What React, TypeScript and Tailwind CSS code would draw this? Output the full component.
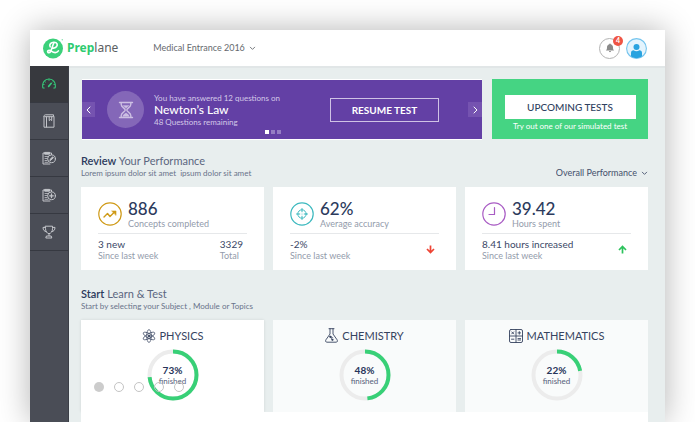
import type { ReactNode } from "react";

const stroke = {
  fill: "none",
  stroke: "currentColor",
  strokeLinecap: "round" as const,
  strokeLinejoin: "round" as const,
};

function Chevron({ dir, className }: { dir: "left" | "right" | "down"; className?: string }) {
  const d = { left: "M5 1 2 4l3 3", right: "M3 1l3 3-3 3", down: "M1.5 2.5 4 5l2.5-2.5" }[dir];
  return (
    <svg viewBox="0 0 8 8" className={className} {...stroke} aria-hidden="true">
      <path d={d} />
    </svg>
  );
}

function GaugeIcon() {
  return (
    <svg viewBox="0 0 14 14" className="size-[14px] text-[#35c778]" {...stroke} strokeWidth="1.1" aria-hidden="true">
      <path d="M2.2 11H.9C-.3 5.500 3 2 7 2s7.300 3.500 6.100 9h-1.300" />
      <path d="M7 2v1.600M2.600 4.200l1 1M11.400 4.200l-.6.600M1 7.500h1.200M13 7.500h-1.200" strokeWidth=".8" />
      <path d="M6.600 9.400 9.300 6.300" strokeWidth="1.600" />
    </svg>
  );
}

function BookIcon() {
  return (
    <svg viewBox="0 0 12 14" className="h-[14px] w-[12px]" {...stroke} strokeWidth="1" aria-hidden="true">
      <path d="M1 2.500C1 1.300 1.500.8 2.500.8h8v1.900H2.200M1 2.500v10.700h10V2.700M3.500 3v10" />
      <path d="M6.200 3v3.600l1.300-1 1.200 1V3" />
    </svg>
  );
}

function ClipboardIcon({ kind }: { kind: "edit" | "add" }) {
  return (
    <svg viewBox="0 0 14 14" className="size-[14px]" {...stroke} strokeWidth="1" aria-hidden="true">
      <path d="M3 2H1v11h7M7.500 2h2v1.500" />
      <path d="M3 1.400h4.500v1.800H3z" fill="currentColor" />
      <path d="M3 5.500h3M3 7.500h2M3 9.500h2M3 11.300h3" strokeWidth=".8" />
      <circle cx="9.500" cy="7.800" r="3.900" />
      {kind === "edit" ? (
        <path d="m8 9.300.4-1.200 2.300-2.300.8.800-2.300 2.300z" fill="currentColor" />
      ) : (
        <path d="M9.500 6v3.600M7.700 7.800h3.600" strokeWidth="1.300" />
      )}
    </svg>
  );
}

function TrophyIcon() {
  return (
    <svg viewBox="0 0 14 14" className="size-[14px]" {...stroke} strokeWidth="1" aria-hidden="true">
      <path d="M3.500 1.200h7v2.500c0 2.700-1.200 4.500-3.500 5-2.300-.5-3.500-2.300-3.500-5z" />
      <path d="M3.500 2.400H1c0 2.600 1.200 4 3.200 4.200M10.500 2.400H13c0 2.600-1.200 4-3.200 4.200M7 8.700v2M4.800 11h4.400l.6 2H4.200z" />
    </svg>
  );
}

function AtomIcon() {
  return (
    <svg viewBox="0 0 14 14" className="size-[14px]" {...stroke} strokeWidth=".7" aria-hidden="true">
      <ellipse cx="7" cy="7" rx="2.300" ry="6.500" />
      <ellipse cx="7" cy="7" rx="2.300" ry="6.500" transform="rotate(60 7 7)" />
      <ellipse cx="7" cy="7" rx="2.300" ry="6.500" transform="rotate(120 7 7)" />
      <circle cx="7" cy="7" r="1" fill="currentColor" />
    </svg>
  );
}

function FlaskIcon() {
  return (
    <svg viewBox="0 0 13 15" className="h-[15px] w-[13px]" {...stroke} strokeWidth=".9" aria-hidden="true">
      <path d="M4 .7h5M5 .7V6L1 11.700c-.9 1.400-.3 2.500 1 2.500h9c1.300 0 1.900-1.100 1-2.500L8 6V.7" />
      <path d="m5.300 8.800 2.500 1M5.300 8.800l2 3" strokeWidth=".7" />
      <circle cx="5.300" cy="8.800" r=".7" fill="currentColor" />
      <circle cx="7.300" cy="11.800" r=".6" fill="currentColor" />
    </svg>
  );
}

function MathIcon() {
  return (
    <svg viewBox="0 0 14 14" className="size-[14px]" {...stroke} strokeWidth=".9" aria-hidden="true">
      <rect x=".5" y=".5" width="13" height="13" rx="1.500" />
      <path d="M7 .5v13M.5 7h13" />
      <path d="m2.700 2.900 2 2M4.700 2.900l-2 2M9 3.900h2.600M10.300 2.600v2.600M2.500 10.200h2.400M9 9.600h2.600M9 11h2.600" />
    </svg>
  );
}

function TrendIcon() {
  return (
    <svg viewBox="0 0 24 24" className="size-[24px] shrink-0 text-[#cf9a17]" {...stroke} aria-hidden="true">
      <circle cx="12" cy="12" r="11.200" strokeWidth="1.200" />
      <path d="m6 15 3.500-3.500 2.500 3L16 10.500" strokeWidth="1.400" />
      <path d="M14 9h4v4z" fill="currentColor" strokeWidth=".6" />
    </svg>
  );
}

function TargetIcon() {
  return (
    <svg viewBox="0 0 24 24" className="size-[24px] shrink-0 text-[#3db9bf]" {...stroke} aria-hidden="true">
      <circle cx="12" cy="12" r="11.200" strokeWidth="1.200" />
      <circle cx="12" cy="12" r="4.200" />
      <path d="M12 6.500v3.300M12 14.200v3.300M6.500 12h3.300M14.200 12h3.300" />
      <circle cx="12" cy="12" r=".5" fill="currentColor" stroke="none" />
    </svg>
  );
}

function ClockIcon() {
  return (
    <svg viewBox="0 0 24 24" className="size-[24px] shrink-0 text-[#a95cc4]" {...stroke} aria-hidden="true">
      <circle cx="12" cy="12" r="11.200" strokeWidth="1.200" />
      <path d="M12.500 5.500v7H7" strokeWidth="1.200" />
    </svg>
  );
}

function Arrow({ up }: { up?: boolean }) {
  return (
    <svg
      viewBox="0 0 9 9"
      className={up ? "size-[9px] text-[#2cc25c]" : "size-[9px] rotate-180 text-[#ee4434]"}
      {...stroke}
      strokeLinecap="butt"
      strokeLinejoin="miter"
      strokeWidth="1.700"
      aria-hidden="true"
    >
      <path d="M4.500 8.500V1.500M1 5l3.500-3.500L8 5" />
    </svg>
  );
}

function Picker({ label, value, className }: { label: string; value: string; className: string }) {
  return (
    <div className={"flex items-center gap-[4px] " + className}>
      <select
        aria-label={label}
        className="field-sizing-content appearance-none bg-transparent text-[9px] leading-[12px] outline-none"
      >
        <option>{value}</option>
      </select>
      <Chevron dir="down" className="size-[7px]" />
    </div>
  );
}

function Header() {
  return (
    <header className="flex h-[36px] items-center bg-white pr-[18px] pl-[13px]">
      <a href="#" className="flex items-center gap-[3px]">
        <svg viewBox="0 0 21 21" className="size-[21px]" aria-hidden="true">
          <circle cx="10" cy="10.500" r="10" fill="#3bd07a" />
          <circle cx="19.300" cy="1.800" r=".8" fill="#8be0b0" />
          <path
            d="M7.200 8.800C5.800 6.500 8 4.200 11 4.300c3.300.1 4 2.600 2.500 4.300-1.200 1.300-2.800 1.700-4 1.400M11 4.600c-1.600 3-2 6.500-3.400 8.900-.8 1.500-3.100 1.500-3-.1.200-1.500 2.300-1.400 3.800-.3 2.500 1.900 5.200 2.300 7-.2"
            fill="none"
            stroke="#fff"
            strokeWidth="1.600"
            strokeLinecap="round"
          />
        </svg>
        <span className="font-['Noto_Sans',sans-serif] text-[12px] leading-[16px] text-[#5c5f63]">
          <b className="font-bold text-[#2ecb70]">Prep</b>lane
        </span>
      </a>
      <Picker label="Course" value="Medical Entrance 2016" className="ml-[35px] text-[#66696e]" />
      <div className="ml-auto flex items-center gap-[6px]">
        <button
          aria-label="Notifications"
          className="relative flex size-[21px] items-center justify-center rounded-full border border-[#b3b3b3] text-[#8a8a8a]"
        >
          <svg viewBox="0 0 10 10" className="size-[10px]" fill="currentColor" aria-hidden="true">
            <path d="M5 .5c.5 0 .7.300.7.700C7.300 1.600 8 2.800 8 4.300c0 1.800.3 2.500 1.200 3.200H.8C1.700 6.800 2 6.100 2 4.300c0-1.500.7-2.700 2.300-3.100 0-.4.200-.7.7-.7zM4 8.100h2c0 .700-.4 1.100-1 1.100s-1-.4-1-1.100z" />
          </svg>
          <span className="absolute -top-[3px] -right-[4px] flex size-[10px] items-center justify-center rounded-full bg-[#ef5444] text-[7px] leading-none font-bold text-white">
            4
          </span>
        </button>
        <button aria-label="Account" className="size-[21px]">
          <svg viewBox="0 0 21 21" className="size-[21px]" aria-hidden="true">
            <circle cx="10.500" cy="10.500" r="9.900" fill="#e4f4fd" stroke="#74c4ee" strokeWidth="1.100" />
            <circle cx="10.500" cy="9" r="3" fill="#29a3e0" />
            <path d="M5 18.300V15c0-1.800 1-2.600 2.700-2.700.7.700 1.700 1 2.800 1s2.100-.3 2.800-1c1.700.1 2.700.9 2.700 2.700v3.300c-3 2.400-8 2.400-11 0z" fill="#29a3e0" />
          </svg>
        </button>
      </div>
    </header>
  );
}

const NAV: { label: string; icon: ReactNode; active?: boolean }[] = [
  { label: "Dashboard", icon: <GaugeIcon />, active: true },
  { label: "Subjects", icon: <BookIcon /> },
  { label: "Practice", icon: <ClipboardIcon kind="edit" /> },
  { label: "Create test", icon: <ClipboardIcon kind="add" /> },
  { label: "Achievements", icon: <TrophyIcon /> },
];

function Sidebar() {
  return (
    <nav className="flex w-[39px] shrink-0 flex-col border-r border-[#3c3f47] bg-[#4a4d56] text-[#c3c5ca]">
      {NAV.map((n) => (
        <a
          key={n.label}
          href="#"
          aria-label={n.label}
          className={
            "flex h-[37px] items-center justify-center border-b border-[#363941] " + (n.active ? "bg-[#37393e]" : "")
          }
        >
          {n.icon}
        </a>
      ))}
    </nav>
  );
}

function Banner() {
  return (
    <section className="flex h-[61px] min-w-0 flex-1 items-center border-y border-white bg-[#6340a5] text-white">
      <button aria-label="Previous" className="flex h-[15px] w-[13px] items-center justify-center bg-[#7553b0]">
        <Chevron dir="left" className="size-[8px]" />
      </button>
      <div className="ml-[12px] flex size-[37px] items-center justify-center rounded-full bg-[#8467b8] text-[#cdbfe3]">
        <svg viewBox="0 0 16 18" className="h-[18px] w-[16px]" {...stroke} strokeWidth="1.400" aria-hidden="true">
          <path d="M1.500 1.500h13M1.500 16.500h13M3.200 2v1.500c0 3 4 3.500 4 5.500s-4 2.500-4 5.500V16M12.800 2v1.500c0 3-4 3.500-4 5.500s4 2.500 4 5.500V16" />
          <path d="M5 4.500h6L8 7.300zM4.800 15.500c0-2 3.200-3.500 3.200-3.500s3.200 1.500 3.200 3.500z" fill="currentColor" strokeWidth=".3" />
        </svg>
      </div>
      <div className="ml-[10px] text-[8px] leading-[10px] text-[#d3c8e8]">
        <p>You have answered 12 questions on</p>
        <h2 className="text-[12px] leading-[14px] font-medium text-white">Newton’s Law</h2>
        <p>48 Questions remaining</p>
      </div>
      <div className="-ml-[15px] flex gap-[2px] self-end pb-[5px]">
        <button aria-label="Slide 1" className="size-[4px] bg-white" />
        <button aria-label="Slide 2" className="size-[4px] bg-[#957dc3]" />
        <button aria-label="Slide 3" className="size-[4px] bg-[#957dc3]" />
      </div>
      <button className="ml-auto h-[24px] w-[109px] border border-[#cfc3e5] text-[10px] leading-[14px] font-bold">
        RESUME TEST
      </button>
      <button aria-label="Next" className="ml-[29px] flex h-[15px] w-[14px] items-center justify-center bg-[#7553b0]">
        <Chevron dir="right" className="size-[8px]" />
      </button>
    </section>
  );
}

function Stat(props: {
  icon: ReactNode;
  value: string;
  label: string;
  delta: string;
  deltaLabel: string;
  right: ReactNode;
}) {
  return (
    <article className="bg-white px-[17px] pt-[12px] pb-[9px] text-[9px] leading-[11px] text-[#939bab]">
      <div className="flex items-center gap-[6px] border-b border-[#e6e8ea] pb-[4px]">
        {props.icon}
        <div>
          <p className="text-[17px] leading-[19px] font-medium text-[#2c3a5c]">{props.value}</p>
          <p>{props.label}</p>
        </div>
      </div>
      <div className="flex items-center justify-between pt-[4px] pr-[4px]">
        <div>
          <p className="text-[10px] leading-[12px] text-[#3a4766]">{props.delta}</p>
          <p>{props.deltaLabel}</p>
        </div>
        {props.right}
      </div>
    </article>
  );
}

function SectionTitle({ strong, rest, sub }: { strong: string; rest: string; sub: string }) {
  return (
    <div>
      <h2 className="text-[11px] leading-[15px] text-[#5b6680]">
        <span className="font-semibold text-[#2c3a5c]">{strong}</span> {rest}
      </h2>
      <p className="text-[8px] leading-[10px] text-[#69738a]">{sub}</p>
    </div>
  );
}

function Subject({ icon, name, percent, active }: { icon: ReactNode; name: string; percent: number; active?: boolean }) {
  const r = 23.5;
  const len = 2 * Math.PI * r;
  return (
    <article
      className={
        "flex flex-col items-center pt-[8px] pb-[11px] text-[#36435f] " +
        (active ? "bg-white shadow-[0_0_3px_rgba(0,0,0,0.1)]" : "bg-[#f9fbfb]")
      }
    >
      <h3 className="flex h-[15px] items-center gap-[4px] text-[11px] leading-[15px]">
        {icon}
        {name}
      </h3>
      <div className="mt-[6px] grid size-[52px] place-items-center">
        <svg viewBox="0 0 52 52" className="col-start-1 row-start-1 size-[52px] -rotate-90" fill="none" aria-hidden="true">
          <circle cx="26" cy="26" r={r} stroke="#ececec" strokeWidth="4" />
          <circle
            cx="26"
            cy="26"
            r={r}
            stroke="#38d077"
            strokeWidth="4"
            strokeDasharray={`${(len * percent) / 100} ${len}`}
          />
        </svg>
        <p className="col-start-1 row-start-1 text-center text-[8px] leading-[10px] text-[#56617a]">
          <b className="block text-[10px] leading-[11px] font-bold text-[#27355a]">{percent}%</b>
          finished
        </p>
      </div>
    </article>
  );
}

export default function App() {
  return (
    <div className="flex min-h-screen flex-col overflow-x-clip bg-white px-[30px] pt-[30px] font-[Lato,sans-serif]">
      <div className="flex flex-1 flex-col bg-[#e8eeee] shadow-[0_0_30px_rgba(0,0,0,0.3)]">
        <Header />
        <div className="flex flex-1">
          <Sidebar />
          <main className="flex min-w-0 flex-1 flex-col border-t-2 border-[#e1e6e7] pr-[17px] pl-[12px]">
            <div className="mt-[11px] flex gap-[10px] pl-px">
              <Banner />
              <section className="flex h-[60px] w-[156px] flex-col items-center bg-[#45d483] pt-[16px] text-white">
                <button className="h-[24px] w-[131px] bg-white text-[10px] leading-[14px] font-medium text-[#2f4160]">
                  UPCOMING TESTS
                </button>
                <p className="mt-[2px] text-[8px] leading-[10px]">Try out one of our simulated test</p>
              </section>
            </div>

            <div className="mt-[13px] flex items-end justify-between">
              <SectionTitle
                strong="Review"
                rest="Your Performance"
                sub={"Lorem ipsum dolor sit amet \u00a0ipsum dolor sit amet"}
              />
              <Picker label="Report" value="Overall Performance" className="h-[10px] text-[#44506c]" />
            </div>
            <div className="mt-[9px] grid grid-cols-3 gap-[9px]">
              <Stat
                icon={<TrendIcon />}
                value="886"
                label="Concepts completed"
                delta="3 new"
                deltaLabel="Since last week"
                right={
                  <div>
                    <p className="text-[10px] leading-[12px] text-[#3a4766]">3329</p>
                    <p>Total</p>
                  </div>
                }
              />
              <Stat
                icon={<TargetIcon />}
                value="62%"
                label="Average accuracy"
                delta="-2%"
                deltaLabel="Since last week"
                right={<Arrow />}
              />
              <Stat
                icon={<ClockIcon />}
                value="39.42"
                label="Hours spent"
                delta="8.41 hours increased"
                deltaLabel="Since last week"
                right={<Arrow up />}
              />
            </div>

            <div className="mt-[16px]">
              <SectionTitle strong="Start" rest="Learn & Test" sub="Start by selecting your Subject , Module or Topics" />
            </div>
            <div className="relative mt-[9px] grid grid-cols-3 gap-[9px]">
              <Subject icon={<AtomIcon />} name="PHYSICS" percent={73} active />
              <Subject icon={<FlaskIcon />} name="CHEMISTRY" percent={48} />
              <Subject icon={<MathIcon />} name="MATHEMATICS" percent={22} />
              <div className="absolute bottom-[20px] left-[13px] flex gap-[10px]">
                <button aria-label="Page 1" className="size-[10px] rounded-full bg-[#cccccc]" />
                <button aria-label="Page 2" className="size-[10px] rounded-full border border-[#c4c4c4]" />
                <button aria-label="Page 3" className="size-[10px] rounded-full border border-[#c4c4c4]" />
                <button aria-label="Page 4" className="size-[10px] rounded-full border border-[#c4c4c4]" />
                <button aria-label="Page 5" className="size-[10px] rounded-full border border-[#c4c4c4]" />
              </div>
            </div>
            <div className="relative min-h-[10px] flex-1 bg-white" />
          </main>
        </div>
      </div>
    </div>
  );
}
